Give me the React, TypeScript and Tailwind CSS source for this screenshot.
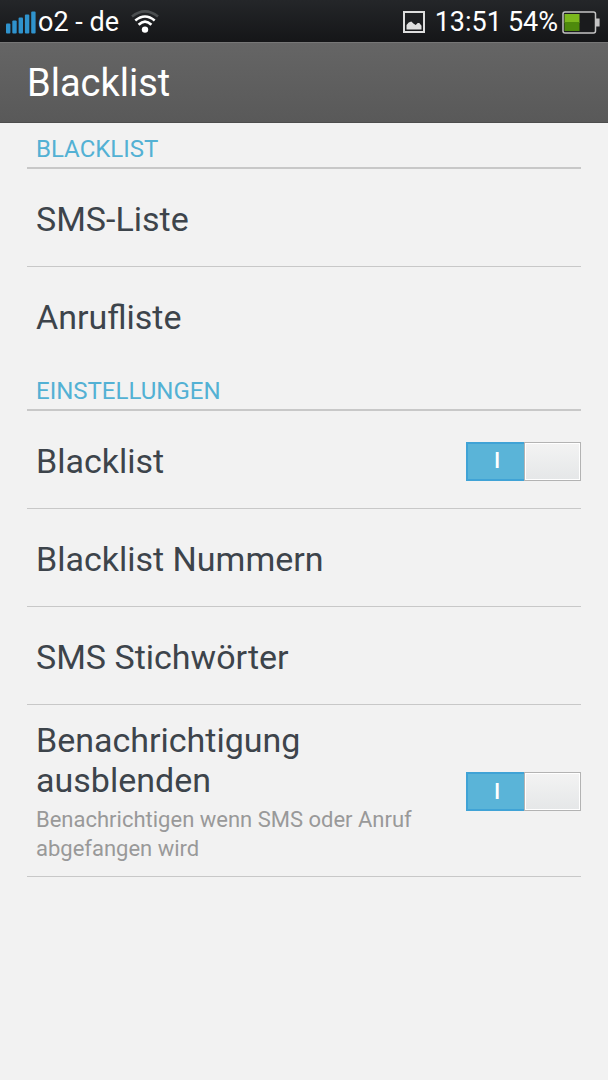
import { useId, useState, type ReactNode } from "react";

/* -------------------------------------------------------------------------- */
/*  Status bar                                                                */
/* -------------------------------------------------------------------------- */

function SignalIcon() {
  return (
    <svg width="30" height="23" viewBox="0 0 30 23" fill="#2f93cd" aria-hidden="true">
      <rect x="0" y="12.5" width="4.4" height="10" rx="1" />
      <rect x="6.3" y="9.5" width="4.4" height="13" rx="1" />
      <rect x="12.6" y="6.5" width="4.4" height="16" rx="1" />
      <rect x="18.9" y="3.5" width="4.4" height="19" rx="1" />
      <rect x="25.2" y="0.5" width="4.4" height="22" rx="1" />
    </svg>
  );
}

function WifiIcon() {
  return (
    <svg width="28" height="24" viewBox="0 0 28 24" fill="none" strokeWidth="2.6" aria-hidden="true">
      <path d="M1 6.6 Q14 -3.8 27 6.6" stroke="#4b4e50" />
      <path d="M4.3 10.6 Q14 2.4 23.7 10.6" stroke="#fff" />
      <path d="M7.6 14.8 Q14 8.6 20.4 14.8" stroke="#fff" />
      <circle cx="14" cy="19.6" r="3.2" fill="#fff" />
    </svg>
  );
}

function PictureIcon() {
  return (
    <svg width="22" height="22" viewBox="0 0 22 22" aria-hidden="true">
      <rect x="1" y="1" width="20" height="20" fill="none" stroke="#dedede" strokeWidth="2" />
      <path d="M3.5 18.5v-4.6l2.2-2.4 2.6-1 2.4 2.2 2 1.4 2-2.2 1.6.2 2.2 2.6v3.8z" fill="#dedede" />
    </svg>
  );
}

function BatteryIcon() {
  return (
    <svg width="38" height="23" viewBox="0 0 38 23" aria-hidden="true">
      <rect x="1" y="1" width="32.5" height="21" rx="2" fill="#1a1b1d" stroke="#c4c4c4" strokeWidth="1.5" />
      <rect x="2.5" y="3" width="15" height="9" fill="#7cb81e" />
      <rect x="2.5" y="11" width="15" height="9" fill="#4e8a0c" />
      <path d="M34 7.5h3.6v8H34z" fill="#c4c4c4" />
    </svg>
  );
}

function StatusBar() {
  return (
    <div className="flex h-[42px] items-center justify-between bg-linear-to-b from-[#242629] to-[#151618] pl-1.5 pr-2 pt-0.5 text-[27px] leading-8 text-white">
      <div className="flex items-center">
        <SignalIcon />
        <span className="ml-0.5">o2 - de</span>
        <span className="ml-3">
          <WifiIcon />
        </span>
      </div>
      <div className="flex items-center">
        <PictureIcon />
        <span className="ml-2.5">13:51</span>
        <span className="ml-1.5">54%</span>
        <span className="ml-1">
          <BatteryIcon />
        </span>
      </div>
    </div>
  );
}

/* -------------------------------------------------------------------------- */
/*  List parts                                                                */
/* -------------------------------------------------------------------------- */

function Section({ title, children }: { title: string; children: ReactNode }) {
  return (
    <section>
      <h2 className="border-b-2 border-[#c8c8c8] px-[9px] pb-0.5 pt-2.5 text-2xl leading-8 text-[#53b1d4]">
        {title}
      </h2>
      {children}
    </section>
  );
}

function LinkRow({ label, last }: { label: string; last?: boolean }) {
  return (
    <button
      type="button"
      className={`block w-full border-b px-[9px] pb-[27px] pt-[30px] text-left text-[34px] leading-10 ${
        last ? "border-transparent" : "border-[#c8c8c8]"
      }`}
    >
      {label}
    </button>
  );
}

function SwitchRow({ label, summary }: { label: string; summary?: string }) {
  const id = useId();
  const [on, setOn] = useState(true);

  return (
    <div
      className={`flex items-center border-b border-[#c8c8c8] ${
        summary ? "pb-[13px] pt-[15px]" : "pb-[27px] pt-[30px]"
      }`}
    >
      <label htmlFor={id} className="flex-1 px-[9px] text-[34px] leading-10">
        {label}
        {summary && (
          <span className="mt-[5px] block text-[22px] leading-[29px] text-[#999]">{summary}</span>
        )}
      </label>
      <label htmlFor={id} className="relative flex h-[39px] w-[115px]">
        <input
          id={id}
          type="checkbox"
          role="switch"
          checked={on}
          onChange={(e) => setOn(e.target.checked)}
          className="absolute inset-0 m-0 size-full opacity-0"
        />
        <span
          className={`flex flex-1 items-center justify-center border-y-2 border-l-2 pl-0.5 text-[22px] font-medium leading-none ${
            on
              ? "border-[#40a3d6] bg-[#5ab4d8] text-white"
              : "order-last border-[#b5b5b5] bg-[#ddd] text-[#999]"
          }`}
        >
          {on ? "I" : "O"}
        </span>
        <span className="w-[57px] border border-[#b3b3b3] bg-linear-to-b from-[#f3f3f3] to-[#e5e7e8] ring-1 ring-inset ring-white" />
      </label>
    </div>
  );
}

/* -------------------------------------------------------------------------- */
/*  Page                                                                      */
/* -------------------------------------------------------------------------- */

export default function App() {
  return (
    <div className="min-h-screen bg-[#f2f2f2] font-[Roboto,sans-serif] text-[#3d444b]">
      <StatusBar />
      <header className="border-y border-b-[#4d4d4d] border-t-[#777] bg-linear-to-b from-[#656565] to-[#595959] px-[27px] pb-[18px] pt-5">
        <h1 className="text-[38px] leading-[41px] text-white">Blacklist</h1>
      </header>
      <main className="px-[27px]">
        <Section title="BLACKLIST">
          <LinkRow label="SMS-Liste" />
          <LinkRow label="Anrufliste" last />
        </Section>
        <Section title="EINSTELLUNGEN">
          <SwitchRow label="Blacklist" />
          <LinkRow label="Blacklist Nummern" />
          <LinkRow label="SMS Stichwörter" />
          <SwitchRow
            label="Benachrichtigung ausblenden"
            summary="Benachrichtigen wenn SMS oder Anruf abgefangen wird"
          />
        </Section>
      </main>
    </div>
  );
}
